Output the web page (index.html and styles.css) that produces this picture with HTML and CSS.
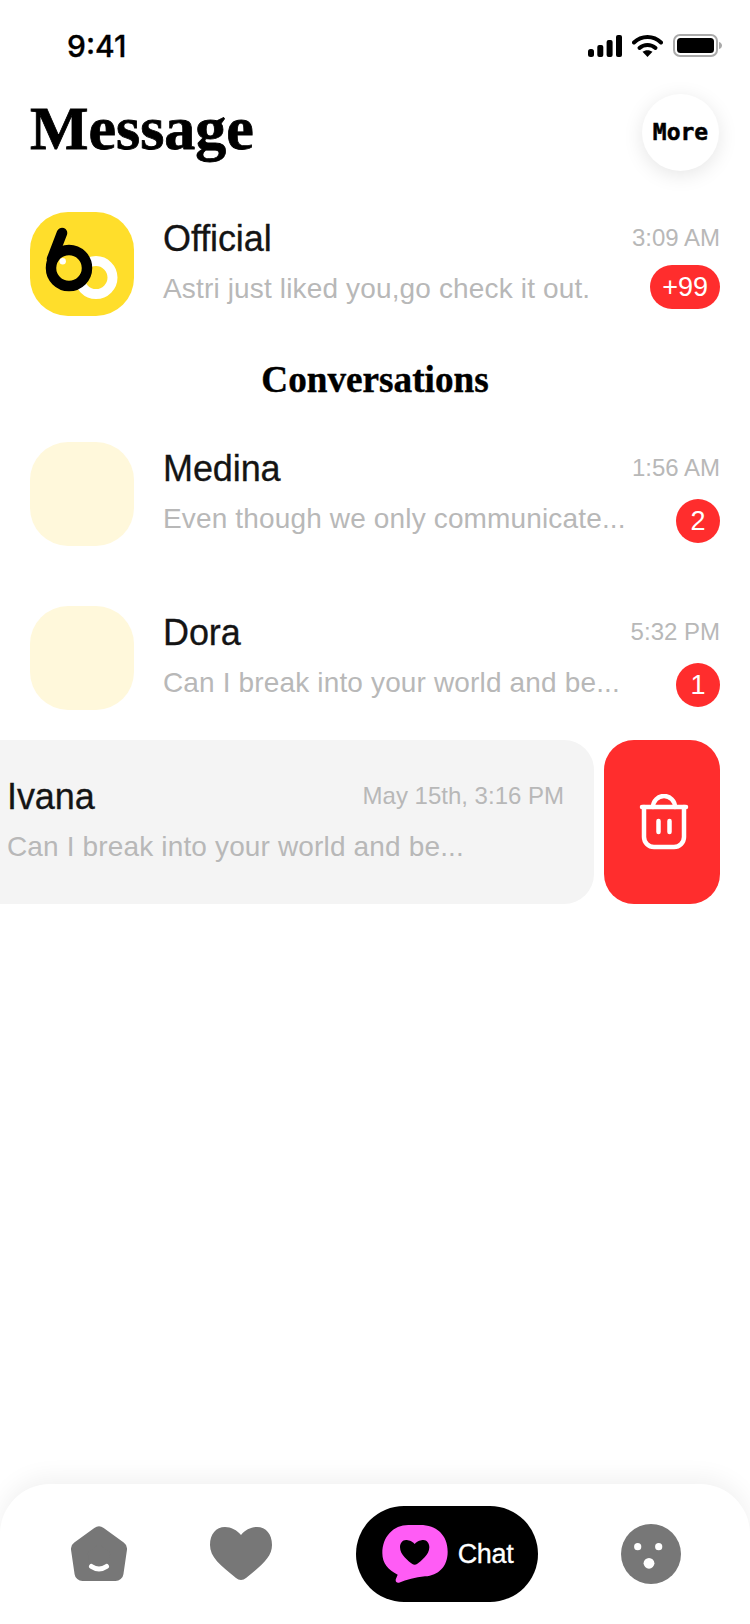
FILE: index.html
```html
<!DOCTYPE html>
<html lang="en">
<head>
<meta charset="utf-8">
<title>Message</title>
<link rel="stylesheet" href="styles.css">
</head>
<body>
<div class="screen">
  <div class="status">
    <span class="clock">9:41</span>
    <div class="status-icons">
      <svg class="signal" width="34" height="22" viewBox="0 0 34 22"><rect x="0" y="14" width="6" height="8" rx="2.5"/><rect x="9.300" y="10" width="6" height="12" rx="2"/><rect x="18.600" y="5" width="6" height="17" rx="2"/><rect x="28" y="0" width="6" height="22" rx="2"/></svg>
      <svg class="wifi" width="31" height="23" viewBox="0 0 31 23"><path d="M2 8.500C9.500 1.200 21.500 1.200 29 8.500" fill="none" stroke="#000" stroke-width="4" stroke-linecap="round"/><path d="M7.500 14C12 10 19 10 23.500 14" fill="none" stroke="#000" stroke-width="4" stroke-linecap="round"/><path d="M15.500 23L10.500 17.800C13.300 15.600 17.700 15.600 20.500 17.800Z"/></svg>
      <svg class="battery" width="50" height="23" viewBox="0 0 50 23"><rect x="1" y="1" width="43" height="21" rx="6" fill="none" stroke="#aaa" stroke-width="2"/><rect x="4" y="4" width="37" height="15" rx="3.500"/><path d="M46 8C48 8.500 49 10 49 11.500C49 13 48 14.500 46 15Z" fill="#aaa"/></svg>
    </div>
  </div>

  <header class="top">
    <h1 class="title">Message</h1>
    <button class="more">More</button>
  </header>

  <div class="row">
    <div class="avatar avatar-logo">
      <svg width="104" height="104" viewBox="0 0 104 104">
        <circle cx="66" cy="65.600" r="16.500" fill="none" stroke="#fff" stroke-width="10"/>
        <circle cx="39" cy="56" r="18" fill="#ffde2b" stroke="#000" stroke-width="10.500"/>
        <path d="M32 21L22 47" fill="none" stroke="#000" stroke-width="10.500" stroke-linecap="round"/>
        <circle cx="32.700" cy="49.300" r="3.200" fill="#fff"/>
      </svg>
    </div>
    <div class="info">
      <div class="line-top"><span class="name">Official</span><span class="time">3:09 AM</span></div>
      <div class="line-bottom"><span class="msg">Astri just liked you,go check it out.</span><span class="badge">+99</span></div>
    </div>
  </div>

  <h2 class="section">Conversations</h2>

  <div class="row">
    <div class="avatar"></div>
    <div class="info">
      <div class="line-top"><span class="name">Medina</span><span class="time">1:56 AM</span></div>
      <div class="line-bottom"><span class="msg">Even though we only communicate...</span><span class="badge badge-count">2</span></div>
    </div>
  </div>

  <div class="row">
    <div class="avatar"></div>
    <div class="info">
      <div class="line-top"><span class="name">Dora</span><span class="time">5:32 PM</span></div>
      <div class="line-bottom"><span class="msg">Can I break into your world and be...</span><span class="badge badge-count">1</span></div>
    </div>
  </div>

  <div class="swipe">
    <div class="row row-open">
      <div class="avatar"></div>
      <div class="info">
        <div class="line-top"><span class="name">Ivana</span><span class="time">May 15th, 3:16 PM</span></div>
        <div class="line-bottom"><span class="msg">Can I break into your world and be...</span></div>
      </div>
    </div>
    <button class="delete" aria-label="Delete">
      <svg width="50" height="56" viewBox="0 0 50 56" fill="none" stroke="#fff" stroke-width="4.500" stroke-linecap="round"><path d="M3 13H47"/><path d="M14 13A11 11 0 0 1 36 13"/><path d="M5 13V43A10 10 0 0 0 15 53H35A10 10 0 0 0 45 43V13"/><path d="M19.500 27V38"/><path d="M30.500 27V38"/></svg>
    </button>
  </div>

  <div class="spacer"></div>

  <nav class="tabbar">
    <svg width="56" height="56" viewBox="0 0 56 56"><path d="M28 8.500L48 23L44.500 47H11.500L8 23Z" fill="#777" stroke="#777" stroke-width="16" stroke-linejoin="round"/><path d="M20.500 40.500Q28 45.500 35.500 40.500" fill="none" stroke="#fff" stroke-width="5" stroke-linecap="round"/></svg>
    <svg width="62" height="54" viewBox="0 0 62 54"><path fill="#777" d="M31 8C27 3 21 0 15 0C6 0 0 7 0 18C0 30 10 38 26 51C29 53.500 33 53.500 36 51C52 38 62 30 62 18C62 7 56 0 47 0C41 0 35 3 31 8Z"/></svg>
    <div class="chat-pill">
      <svg width="66" height="58" viewBox="22 165 196 174"><path fill="#ff5cf5" d="M100 165H135C185 165 218 195 218 245C218 290 190 316 150 319C120 322 95 330 72 338C64 340 60 333 63 326L68 314C40 300 22 280 22 250C22 200 55 165 100 165Z"/><path fill="#000" d="M119 222C110 212 100 210 93 210C82 210 75 220 75 232C75 255 100 273 112 282C116 285 122 285 126 282C138 273 163 255 163 232C163 220 156 210 145 210C138 210 128 212 119 222Z"/></svg>
      <span class="chat-label">Chat</span>
    </div>
    <svg width="60" height="60" viewBox="0 0 60 60"><circle cx="30" cy="30" r="30" fill="#777"/><circle cx="16.700" cy="22.700" r="3.600" fill="#fff"/><circle cx="37.700" cy="22.700" r="3.600" fill="#fff"/><circle cx="28" cy="39.300" r="5.400" fill="#fff"/></svg>
  </nav>
</div>
</body>
</html>
```

FILE: styles.css
```css
* { box-sizing: border-box; }
html, body { margin: 0; padding: 0; background: #fff; }
.screen {
  width: 750px;
  height: 1624px;
  overflow: hidden;
  display: flex;
  flex-direction: column;
  font-family: "Liberation Sans", Arial, sans-serif;
  color: #141414;
}
.status {
  height: 88px;
  flex: none;
  display: flex;
  justify-content: space-between;
  align-items: center;
  padding: 3px 27px 0 67px;
}
.clock { font-family: Inter, "Liberation Sans", sans-serif; font-size: 30px; font-weight: 500; color: #000; line-height: 1; -webkit-text-stroke: 0.3px #000; }
.status-icons { display: flex; align-items: center; gap: 10px; }
.top {
  height: 94px;
  flex: none;
  display: flex;
  justify-content: space-between;
  align-items: center;
  padding: 0 31px 6px 30px;
}
.title { margin: 0 0 8px; font-family: "Liberation Serif", "Times New Roman", serif; font-weight: 700; font-size: 62px; color: #000; line-height: 1; -webkit-text-stroke: 0.8px #000; }
.more {
  width: 77px;
  height: 77px;
  padding: 0;
  border: 0;
  border-radius: 50%;
  background: #fff;
  box-shadow: 0 4px 20px rgba(0, 0, 0, 0.1);
  font-family: "DejaVu Sans Mono", monospace;
  font-weight: 700;
  font-size: 23px;
  color: #000;
  -webkit-text-stroke: 0.5px #000;
}
.row {
  flex: none;
  height: 164px;
  display: flex;
  align-items: center;
  padding: 0 30px;
  gap: 29px;
}
.avatar {
  width: 104px;
  height: 104px;
  flex: none;
  border-radius: 38px;
  background: #fff8db;
  overflow: hidden;
}
.avatar-logo { background: #ffde2b; }
.avatar-logo svg { display: block; }
.info { flex: 1; min-width: 0; height: 104px; display: flex; flex-direction: column; }
.line-top { height: 52px; display: flex; justify-content: space-between; align-items: center; }
.line-bottom { height: 46px; display: flex; justify-content: space-between; align-items: center; }
.name { padding-top: 2px; font-size: 36px; letter-spacing: -0.1px; color: #141414; -webkit-text-stroke: 0.3px #141414; }
.time { font-size: 24px; color: #b8b8b8; }
.msg { padding-top: 4px; font-size: 28px; letter-spacing: 0.15px; color: #b8b8b8; white-space: nowrap; }
.badge {
  min-width: 44px;
  height: 44px;
  padding: 0 12px;
  border-radius: 22px;
  background: #ff2d2d;
  color: #fff;
  font-size: 27px;
  display: flex;
  align-items: center;
  justify-content: center;
}
.badge-count { margin-top: 8px; padding: 0; }
.section {
  flex: none;
  height: 66px;
  margin: 0;
  padding-top: 1px;
  text-align: center;
  font-family: "Liberation Serif", "Times New Roman", serif;
  font-weight: 700;
  font-size: 37.200px;
  line-height: 66px;
  color: #000;
  -webkit-text-stroke: 0.4px #000;
}
.swipe { flex: none; display: flex; gap: 10px; margin-left: -156px; }
.row-open { width: 750px; background: #f4f4f4; border-radius: 0 30px 30px 0; }
.delete {
  width: 116px;
  height: 164px;
  flex: none;
  padding: 0 0 0 3px;
  border: 0;
  border-radius: 30px;
  background: #ff2d2d;
  display: flex;
  align-items: center;
  justify-content: center;
}
.spacer { flex: 1; }
.tabbar {
  height: 140px;
  flex: none;
  display: flex;
  justify-content: space-between;
  align-items: center;
  padding: 0 69px 0 71px;
  background: #fff;
  border-radius: 50px 50px 0 0;
  box-shadow: 0 -6px 24px rgba(0, 0, 0, 0.06);
}
.chat-pill {
  width: 182px;
  height: 96px;
  border-radius: 48px;
  background: #000;
  display: flex;
  align-items: center;
  gap: 10px;
  padding-left: 26px;
}
.chat-label { color: #fff; font-size: 27px; letter-spacing: -0.3px; -webkit-text-stroke: 0.3px #fff; }
```
